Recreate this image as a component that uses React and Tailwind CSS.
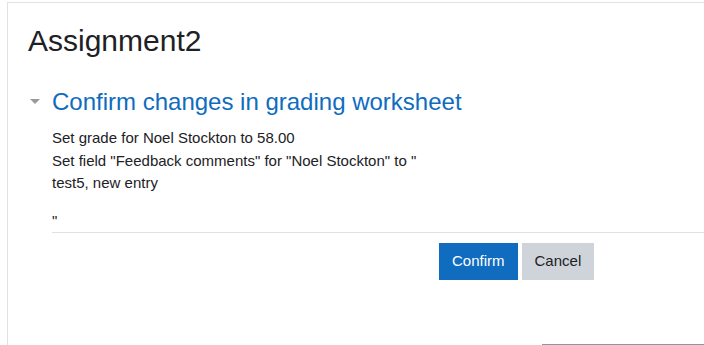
export default function App() {
  return (
    <div className="min-h-screen bg-white pl-[7px] pt-[2px] font-['Liberation_Sans',Arial,sans-serif] text-[#1d2125] overflow-hidden">
      <div className="border-l border-t border-[#dee2e6] pl-5 pt-5">
        {/* HEADER */}
        <h2 className="text-[30px] leading-[36px] font-normal">Assignment2</h2>

        {/* SECTION */}
        <div className="mt-[28px] flex items-center">
          <svg className="ml-[2px] mr-[12px]" width="10" height="6" viewBox="0 0 10 6">
            <polygon points="0,0 10,0 5,5" fill="#9a9a9a" />
          </svg>
          <h3 className="text-[24px] leading-[29px] text-[#0f6cbf] font-normal">
            Confirm changes in grading worksheet
          </h3>
        </div>

        <div className="ml-[24px] mt-[11px] text-[15px] leading-[22.5px]">
          <div>Set grade for Noel Stockton to 58.00</div>
          <div>Set field "Feedback comments" for "Noel Stockton" to "</div>
          <p className="mb-[15px]">test5, new entry</p>
          <div>"</div>
        </div>

        {/* ACTIONS */}
        <div className="ml-[24px] border-t border-[#dee2e6] pt-[10px] pl-[387px] flex gap-1">
          <button className="bg-[#0f6cbf] text-white text-[15px] leading-[22.5px] px-3 py-1.5 border border-[#0f6cbf]">
            Confirm
          </button>
          <button className="bg-[#ced4da] text-[#1d2125] text-[15px] leading-[22.5px] px-3 py-1.5 border border-[#ced4da]">
            Cancel
          </button>
        </div>

        <div className="mt-[64px] flex justify-end">
          <div className="w-[162px] h-8 border-t border-[#8f959e]" />
        </div>
      </div>
    </div>
  )
}
